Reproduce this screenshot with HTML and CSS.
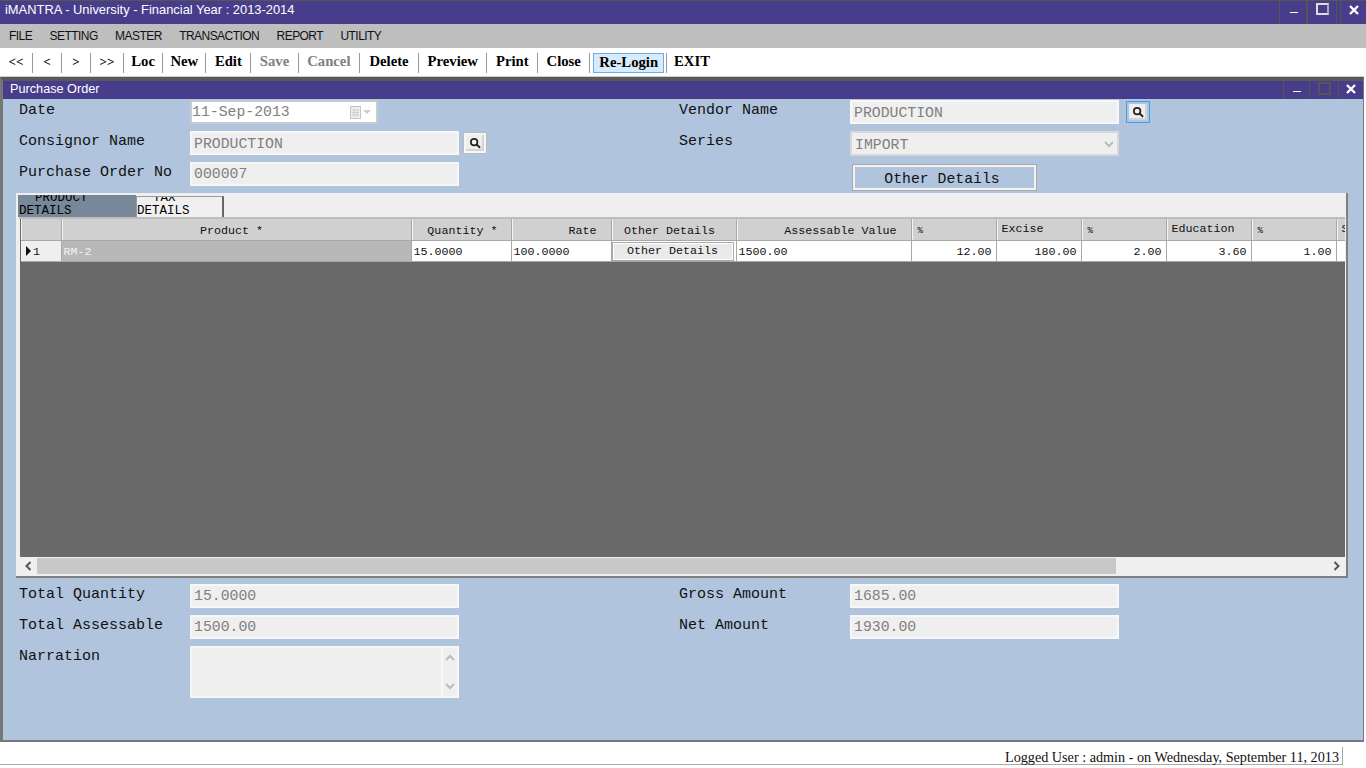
FILE: index.html
```html
<!doctype html>
<html lang="en">
    <head>
        <meta charset="UTF-8" />
        <meta name="viewport" content="width=device-width, initial-scale=1.0" />
        <title>iMANTRA - Purchase Order</title>
        <link rel="stylesheet" href="styles.css">
    </head>
    <body>
        <svg class="defs" width="0" height="0">
            <symbol id="lens" viewBox="0 0 14 14">
                <circle cx="6" cy="6" r="3.8" fill="#f4f4f4" stroke="#222" stroke-width="2" />
                <path d="M8.8 8.8 L13 12.6" stroke="#222" stroke-width="2.2" />
            </symbol>
        </svg>

        <header class="app-title">
            <span class="app-title-text">iMANTRA - University - Financial Year : 2013-2014</span>
            <div class="caption caption-app">
                <span class="cap cap-min"><i></i></span>
                <span class="cap cap-max"><i></i></span>
                <span class="cap cap-close">
                    <svg width="10" height="10" viewBox="0 0 10 10"><path d="M1 1 L9 9 M9 1 L1 9" stroke="#fff" stroke-width="2.4" /></svg>
                </span>
            </div>
        </header>

        <nav class="menubar">
            <a>FILE</a>
            <a>SETTING</a>
            <a>MASTER</a>
            <a>TRANSACTION</a>
            <a>REPORT</a>
            <a>UTILITY</a>
        </nav>

        <div class="toolbar">
            <a class="tool nav nav-first">&lt;&lt;</a>
            <a class="tool nav">&lt;</a>
            <a class="tool nav">&gt;</a>
            <a class="tool nav nav-last">&gt;&gt;</a>
            <a class="tool tight">Loc</a>
            <a class="tool tight">New</a>
            <a class="tool">Edit</a>
            <a class="tool off">Save</a>
            <a class="tool off">Cancel</a>
            <a class="tool wide">Delete</a>
            <a class="tool">Preview</a>
            <a class="tool">Print</a>
            <a class="tool">Close</a>
            <a class="tool relogin"><span>Re-Login</span></a>
            <a class="tool last">EXIT</a>
        </div>

        <main class="window">
            <div class="win-title">
                <span>Purchase Order</span>
                <div class="caption caption-win">
                    <span class="cap cap-min"><i></i></span>
                    <span class="cap cap-max"><i></i></span>
                    <span class="cap cap-close">
                        <svg width="10" height="10" viewBox="0 0 10 10"><path d="M1 1 L9 9 M9 1 L1 9" stroke="#fff" stroke-width="2.4" /></svg>
                    </span>
                </div>
            </div>

            <div class="win-body">
                <section class="fields">
                    <div class="col">
                        <div class="row">
                            <label>Date</label>
                            <div class="input input-low date">
                                <span>11-Sep-2013</span>
                                <svg class="cal" width="11" height="13" viewBox="0 0 11 13">
                                    <rect x="0.5" y="0.5" width="10" height="12" fill="#eee" stroke="#c4c4c4" />
                                    <path d="M2 4h7M2 6.5h7M2 9h7M4 3v8M7 3v8" stroke="#d0d0d0" />
                                </svg>
                                <i class="caret"></i>
                            </div>
                        </div>
                        <div class="row">
                            <label>Consignor Name</label>
                            <div class="input input-low">PRODUCTION</div>
                            <button class="lookup"><svg width="12" height="12"><use href="#lens" /></svg></button>
                        </div>
                        <div class="row">
                            <label>Purchase Order No</label>
                            <div class="input">000007</div>
                        </div>
                    </div>
                    <div class="col">
                        <div class="row">
                            <label>Vendor Name</label>
                            <div class="input input-low">PRODUCTION</div>
                            <button class="lookup focus"><svg width="12" height="12"><use href="#lens" /></svg></button>
                        </div>
                        <div class="row">
                            <label>Series</label>
                            <div class="input select">
                                <span>IMPORT</span>
                                <svg width="10" height="7" viewBox="0 0 10 7"><path d="M1 1 L5 5 L9 1" fill="none" stroke="#bbb" stroke-width="2" /></svg>
                            </div>
                        </div>
                        <div class="row row-btn">
                            <button class="other-btn">Other Details</button>
                        </div>
                    </div>
                </section>

                <section class="tab-panel">
                    <div class="tabs">
                        <div class="tab tab-on"><span>PRODUCT DETAILS</span></div>
                        <div class="tab tab-off"><span>TAX DETAILS</span></div>
                    </div>
                    <div class="grid-wrap">
                        <div class="grid-view">
                            <table class="grid">
                                <colgroup>
                                    <col class="w-head" />
                                    <col class="w-product" />
                                    <col class="w-100" />
                                    <col class="w-100" />
                                    <col class="w-other" />
                                    <col class="w-value" />
                                    <col class="w-85" />
                                    <col class="w-85" />
                                    <col class="w-85" />
                                    <col class="w-85" />
                                    <col class="w-85" />
                                    <col class="w-85" />
                                </colgroup>
                                <thead>
                                    <tr>
                                        <th></th>
                                        <th class="center h-product">Product *</th>
                                        <th class="right h-qty">Quantity *</th>
                                        <th class="right">Rate</th>
                                        <th class="center h-other">Other Details</th>
                                        <th class="right">Assessable Value</th>
                                        <th class="pct">%</th>
                                        <th class="raised">Excise</th>
                                        <th class="pct">%</th>
                                        <th class="raised">Education</th>
                                        <th class="pct">%</th>
                                        <th class="raised">SHE</th>
                                    </tr>
                                </thead>
                                <tbody>
                                    <tr>
                                        <td class="rowhead"><i class="arrow"></i>1</td>
                                        <td class="ro">RM-2</td>
                                        <td>15.0000</td>
                                        <td>100.0000</td>
                                        <td class="btn-cell"><button class="cell-btn">Other Details</button></td>
                                        <td>1500.00</td>
                                        <td class="num">12.00</td>
                                        <td class="num">180.00</td>
                                        <td class="num">2.00</td>
                                        <td class="num">3.60</td>
                                        <td class="num">1.00</td>
                                        <td class="num">1.80</td>
                                    </tr>
                                </tbody>
                            </table>
                        </div>
                        <div class="hscroll">
                            <svg class="arr" width="8" height="10" viewBox="0 0 8 10"><path d="M6 1 L2 5 L6 9" fill="none" stroke="#555" stroke-width="2" /></svg>
                            <div class="thumb"></div>
                            <svg class="arr arr-r" width="8" height="10" viewBox="0 0 8 10"><path d="M2 1 L6 5 L2 9" fill="none" stroke="#555" stroke-width="2" /></svg>
                        </div>
                    </div>
                </section>

                <section class="fields fields-bottom">
                    <div class="col">
                        <div class="row">
                            <label>Total Quantity</label>
                            <div class="input">15.0000</div>
                        </div>
                        <div class="row">
                            <label>Total Assessable</label>
                            <div class="input">1500.00</div>
                        </div>
                        <div class="row row-tall">
                            <label>Narration</label>
                            <div class="input textarea">
                                <div class="vscroll">
                                    <svg width="10" height="7" viewBox="0 0 10 7"><path d="M1 6 L5 2 L9 6" fill="none" stroke="#bbb" stroke-width="2" /></svg>
                                    <svg width="10" height="7" viewBox="0 0 10 7"><path d="M1 1 L5 5 L9 1" fill="none" stroke="#bbb" stroke-width="2" /></svg>
                                </div>
                            </div>
                        </div>
                    </div>
                    <div class="col">
                        <div class="row">
                            <label>Gross Amount</label>
                            <div class="input">1685.00</div>
                        </div>
                        <div class="row">
                            <label>Net Amount</label>
                            <div class="input">1930.00</div>
                        </div>
                    </div>
                </section>
            </div>
        </main>

        <footer class="status">
            <span>Logged User : admin - on Wednesday, September 11, 2013</span>
        </footer>
    </body>
</html>
```

FILE: styles.css
```css
html,
body {
    margin: 0;
    padding: 0;
    height: 768px;
    overflow: hidden;
    background: #fff;
}
body {
    display: flex;
    flex-direction: column;
    font-family: "Liberation Sans", Arial, sans-serif;
    font-size: 12px;
    color: #000;
}
.defs {
    position: absolute;
}
i {
    display: block;
}

/* app chrome */
.app-title {
    height: 23px;
    border-top: 1px solid #555;
    background: #483d8b;
    color: #fff;
    display: flex;
    align-items: center;
    justify-content: space-between;
    padding-left: 5px;
    font-size: 12.9px;
}
.app-title-text {
    margin-top: -6px;
}
.caption {
    display: flex;
    align-self: stretch;
}
.cap {
    display: flex;
    justify-content: center;
    box-sizing: border-box;
    border-left: 1px solid #555;
}
.caption-app .cap-min {
    width: 27px;
    padding: 10px 0 0 2px;
}
.caption-app .cap-max {
    width: 31px;
    padding-top: 2px;
    border-left-width: 2px;
    border-right: 1px solid #555;
    margin-right: 3px;
}
.caption-app .cap-close {
    width: 26px;
    padding-top: 4px;
}
.cap-min i {
    width: 8px;
    height: 1px;
    border-bottom: 1px solid #fff;
}
.cap-max i {
    width: 9px;
    height: 8px;
    border: 2px solid #ddd;
    border-right-color: #aaa;
}
.menubar {
    height: 24px;
    background: #bebebe;
    display: flex;
    align-items: center;
    gap: 17.4px;
    padding-left: 9px;
    color: #111;
    letter-spacing: -0.55px;
}
.toolbar {
    height: 29px;
    background: #fff;
    display: flex;
    align-items: center;
    font-family: "Liberation Serif", "Times New Roman", serif;
    font-size: 14.7px;
    font-weight: bold;
}
.tool {
    height: 20px;
    line-height: 17px;
    padding: 0 8.5px;
    border-right: 1px solid #999;
    box-sizing: content-box;
    white-space: nowrap;
}
.tool.tight {
    padding: 0 7.25px;
}
.tool.wide {
    padding: 0 9.5px;
}
.tool.nav {
    width: 28px;
    padding: 0;
    text-align: center;
    font-size: 13px;
}
.tool.nav-first {
    width: 32px;
}
.tool.nav-last {
    width: 32px;
}
.tool.off {
    color: #808080;
}
.tool.last {
    border-right: 0;
    padding-left: 7px;
}
.tool.relogin {
    padding: 0 2px 0 3px;
}
.relogin span {
    display: block;
    padding: 0 5px;
    height: 18px;
    background: #d9ebfb;
    border: 1px solid #6aaee8;
}

/* child window */
.window {
    width: 1364px;
    height: 665px;
    box-sizing: border-box;
    border: 1px solid #777;
    border-top: 4px solid #5a5a5a;
    border-left-width: 3px;
    border-bottom-width: 2px;
    display: flex;
    flex-direction: column;
    box-shadow: 0 -1px 0 #ccc;
    flex: none;
}
.win-title {
    height: 18px;
    background: #483d8b;
    color: #fff;
    display: flex;
    align-items: center;
    justify-content: space-between;
    padding-left: 7px;
    font-size: 12.7px;
}
.win-title > span {
    margin-top: -2px;
}
.caption-win .cap-min {
    width: 26px;
    padding: 9px 0 0;
}
.caption-win .cap-max {
    width: 29px;
    padding-top: 1px;
}
.caption-win .cap-max i {
    width: 9px;
    height: 9px;
    border-color: #555;
}
.caption-win .cap-close {
    width: 25px;
    padding-top: 3px;
}
.win-body {
    flex: 1;
    background: #b0c4de;
    padding-top: 1px;
    display: flex;
    flex-direction: column;
}

/* form fields */
.fields {
    display: grid;
    grid-template-columns: 660px 1fr;
    padding-left: 16px;
    font-family: "Liberation Mono", "Courier New", monospace;
    font-size: 15px;
}
.col {
    display: flex;
    flex-direction: column;
    gap: 7px;
}
.row {
    display: flex;
    height: 24px;
    gap: 4px;
}
.row label {
    width: 167px;
    line-height: 21px;
    color: #111;
}
.input {
    width: 269px;
    box-sizing: border-box;
    padding-left: 2px;
    height: 24px;
    line-height: 20px;
    background: #efefef;
    border: 2px solid #f7f7f7;
    color: #808080;
    font-size: 14.8px;
}
.input-low {
    line-height: 22px;
}
.date {
    width: 188px;
    padding-left: 0;
    background: #fff;
    border-color: #c8ccd2;
    display: flex;
    align-items: center;
}
.date span {
    flex: 1;
}
.cal {
    margin-right: 2px;
}
.caret {
    width: 0;
    height: 0;
    border: 4px solid transparent;
    border-top: 4px solid #ccc;
    border-bottom: 0;
    margin-right: 5px;
}
.select {
    display: flex;
    align-items: center;
    justify-content: space-between;
    height: 25px;
    padding-left: 3px;
    padding-right: 3px;
    padding-top: 2px;
    border-color: #d8d8d8;
}
.lookup {
    width: 24px;
    height: 22px;
    margin-top: 1px;
    padding: 0;
    border: 1px solid #bbb;
    background: #eee;
    box-shadow: inset 0 0 0 2px #f6f6f6, inset -1px -1px 0 3px #d4d4d4;
    border-radius: 1px;
    display: flex;
    align-items: center;
    justify-content: center;
}
.lookup.focus {
    border-color: #3d9bf5;
    margin-left: 3px;
    box-shadow: inset 0 0 0 2px #b0c4de, inset -1px -1px 0 3px #d4d4d4;
}
.row-btn {
    margin-top: 2px;
    height: 27px;
}
.other-btn {
    margin-left: 173px;
    width: 185px;
    height: 27px;
    background: #b0c4de;
    border: 1px solid #aaa;
    outline: 0;
    box-shadow: inset 0 0 0 2px #f2f2f2;
    font-family: "Liberation Mono", "Courier New", monospace;
    font-size: 14.8px;
    color: #111;
    padding: 2px 5px 0 0;
}

/* tabs and grid */
.tab-panel {
    margin: 2px 15px 0 13px;
    height: 385px;
    box-sizing: border-box;
    background: #efefef;
    border-right: 2px solid #808080;
    border-bottom: 2px solid #808080;
    display: flex;
    flex-direction: column;
    font-family: "Liberation Mono", "Courier New", monospace;
    font-size: 11.7px;
}
.tabs {
    height: 24px;
    display: flex;
    align-items: flex-end;
    padding-left: 2px;
    font-size: 12.5px;
    flex: none;
}
.tab {
    box-sizing: border-box;
    line-height: 13px;
    overflow: hidden;
    display: flex;
    align-items: flex-end;
    text-indent: 16px;
    color: #000;
}
.tab span {
    display: block;
    margin-bottom: -1px;
}
.tab-on {
    width: 118px;
    height: 22px;
    background: #778899;
    padding-left: 1px;
}
.tab-off {
    width: 88px;
    height: 21px;
    background: #f0f0f0;
    border-top: 1px solid #999;
    border-right: 2px solid #666;
    border-left: 1px solid #999;
}
.grid-wrap {
    flex: 1;
    display: flex;
    flex-direction: column;
    margin-left: 3px;
    margin-right: 1px;
    border-top: 2px solid #bdbdbd;
    min-height: 0;
}
.grid-view {
    flex: 1;
    margin-left: 1px;
    background: #696969;
    overflow: hidden;
}
.grid {
    table-layout: fixed;
    width: 1400px;
    margin-left: 1px;
    border-collapse: collapse;
    color: #111;
}
.w-head {
    width: 40px;
}
.w-product {
    width: 350px;
}
.w-100 {
    width: 100px;
}
.w-other {
    width: 125px;
}
.w-value {
    width: 175px;
}
.w-85 {
    width: 85px;
}
.grid th {
    box-sizing: border-box;
    height: 21px;
    padding: 4px 6px 0;
    background: #d0d0d0;
    border-right: 1px solid #a8a8a8;
    border-bottom: 1px solid #a8a8a8;
    box-shadow: inset 1px 0 0 #f4f4f4;
    font-weight: normal;
    line-height: 13px;
    text-align: left;
    white-space: nowrap;
    overflow: hidden;
}
.grid th.center {
    text-align: center;
}
.grid th.h-product {
    padding-right: 15px;
}
.grid th.h-other {
    padding-right: 14px;
    padding-left: 6px;
}
.grid th.right {
    text-align: right;
    padding-right: 14px;
}
.grid th.h-qty {
    padding-right: 13px;
}
.grid th.raised {
    padding: 2px 5px 2px;
}
.grid th.pct {
    font-size: 9px;
}
.grid td {
    box-sizing: border-box;
    height: 21px;
    padding: 4px 2px 0;
    background: #fff;
    border-right: 1px solid #a8a8a8;
    border-bottom: 1px solid #a8a8a8;
    line-height: 13px;
    white-space: nowrap;
    overflow: hidden;
}
.grid td.rowhead {
    background: #efefef;
    padding-left: 5px;
}
.arrow {
    display: inline-block;
    width: 0;
    height: 0;
    margin-right: 2px;
    vertical-align: -1px;
    border-left: 5px solid #111;
    border-top: 5px solid transparent;
    border-bottom: 5px solid transparent;
}
.grid td.ro {
    background: #b8b8b8;
    color: #f2f2f2;
}
.grid td.num {
    text-align: right;
    padding-right: 4px;
}
.grid td.btn-cell {
    padding: 1px 2px 0 0;
}
.cell-btn {
    display: block;
    width: 100%;
    height: 19px;
    padding: 0;
    border: 1px solid #aaa;
    box-shadow: inset 0 0 0 1px #fff;
    background: #eaeaea;
    font-family: "Liberation Mono", "Courier New", monospace;
    font-size: 11.7px;
    color: #111;
}
.hscroll {
    height: 16px;
    margin: 1px 0 2px 1px;
    flex: none;
    display: flex;
    align-items: center;
    background: #efefef;
}
.arr {
    width: 17px;
    flex: none;
}
.thumb {
    width: 1079px;
    height: 100%;
    background: #c8c8c8;
}
.arr-r {
    margin-left: auto;
    margin-right: 0;
}

/* bottom fields */
.fields-bottom {
    margin-top: 6px;
}
.row-tall {
    height: 52px;
}
.textarea {
    height: 52px;
    display: flex;
    justify-content: flex-end;
    padding: 0;
}
.vscroll {
    width: 16px;
    border-left: 2px solid #f7f7f7;
    display: flex;
    flex-direction: column;
    align-items: center;
    justify-content: space-between;
    padding: 6px 0;
    box-sizing: border-box;
}

/* status line */
.status {
    width: 1342px;
    height: 17px;
    margin-top: 5px;
    box-sizing: content-box;
    border-right: 1px solid #aaa;
    border-bottom: 1px solid #aaa;
    display: flex;
    justify-content: flex-end;
    align-items: flex-end;
    margin-right: auto;
    font-family: "Liberation Serif", "Times New Roman", serif;
    font-size: 14.2px;
    color: #111;
}
.status span {
    white-space: nowrap;
    margin-right: 3px;
    margin-bottom: -2px;
}
```
